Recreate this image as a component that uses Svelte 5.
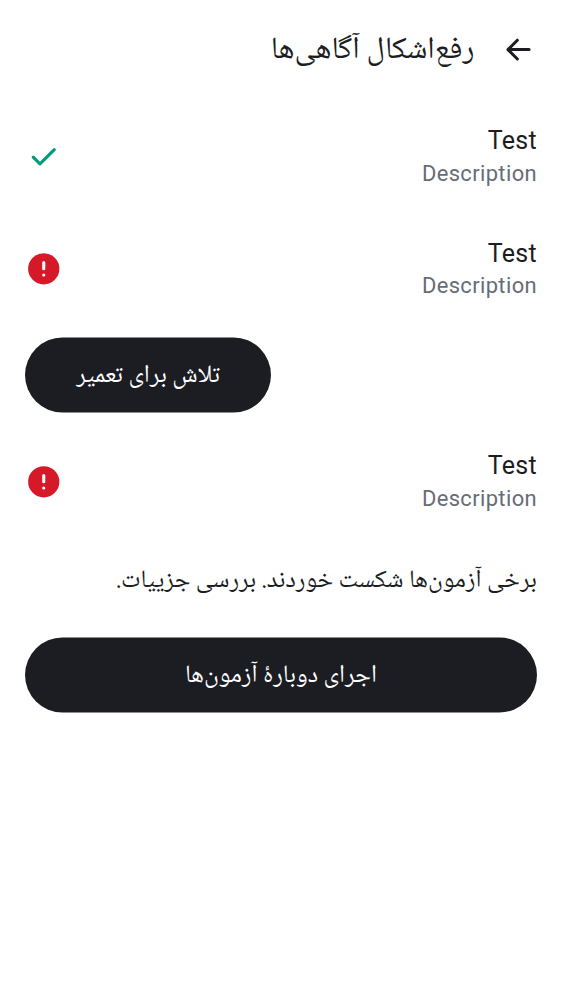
<script>
  const failed = 'failed', passed = 'passed';
</script>

{#snippet row(state)}
  <div class="row">
    <div class="text"><div class="title">Test</div><div class="desc">Description</div></div>
    {#if state === passed}
      <svg width="37.5" height="37.5" viewBox="0 0 24 24"><path fill="#009b78" d="M9.55 17.575q-.2 0-.375-.062a.9.9 0 0 1-.325-.213L4.55 13q-.274-.274-.262-.713.012-.437.287-.712a.95.95 0 0 1 .7-.275q.425 0 .7.275L9.55 15.15l8.475-8.475q.274-.275.713-.275.437 0 .712.275.275.274.275.713 0 .437-.275.712l-9.2 9.2q-.15.15-.325.212a1.1 1.1 0 0 1-.375.063"/></svg>
    {:else}
      <svg width="37.5" height="37.5" viewBox="0 0 24 24"><circle cx="12" cy="12" r="10" fill="#d51928"/><path d="M12 8v4M12 16h.01" stroke="#fff" stroke-width="2" stroke-linecap="round"/></svg>
    {/if}
  </div>
{/snippet}

<main dir="rtl">
  <header>
    <svg width="37.5" height="37.5" viewBox="0 0 24 24"><path d="m11.1 5.9-6 6 6 6M5.5 11.9h13.1" fill="none" stroke="#1b1d22" stroke-width="1.95" stroke-linecap="round" stroke-linejoin="round"/></svg>
    <h1>رفع‌اشکال آگاهی‌ها</h1>
  </header>
  {@render row(passed)}
  {@render row(failed)}
  <button class="fix">تلاش برای تعمیر</button>
  {@render row(failed)}
  <p>برخی آزمون‌ها شکست خوردند. بررسی جزییات.</p>
  <button class="run">اجرای دوبارهٔ آزمون‌ها</button>
</main>

<style>
  :global(body) { margin: 0; background: #fff; }
  main { box-sizing: border-box; height: 1000px; padding: 0 25px; display: flex; flex-direction: column; color: #1b1d22; font-family: "Noto Naskh Arabic UI", "Noto Naskh Arabic", "Noto Sans Arabic UI", "Noto Sans Arabic", sans-serif; overflow: hidden; }
  header { display: flex; align-items: center; height: 100px; gap: 25px; }
  h1 { margin: 0; font-size: 31px; font-weight: 400; line-height: 44px; }
  svg { display: block; flex: none; }
  .row { display: flex; align-items: center; justify-content: space-between; height: 112.5px; flex: none; }
  .text { direction: ltr; text-align: right; padding-bottom: 3px; font-family: Roboto, sans-serif; }
  .title { font-size: 25px; line-height: 37.5px; letter-spacing: .3px; }
  .desc { font-size: 21.9px; line-height: 28px; letter-spacing: .39px; color: #656d77; }
  button { border: 0; border-radius: 38px; height: 75px; background: #1b1d22; color: #fff; font: 400 25px "Noto Naskh Arabic UI", "Noto Naskh Arabic", "Noto Sans Arabic", sans-serif; padding: 0; flex: none; transform: translateY(-.5px); }
  .fix { align-self: flex-end; width: 246px; margin: 12.5px 0; }
  p { font-size: 25px; line-height: 32px; margin: 26px 0 42px; }
</style>
